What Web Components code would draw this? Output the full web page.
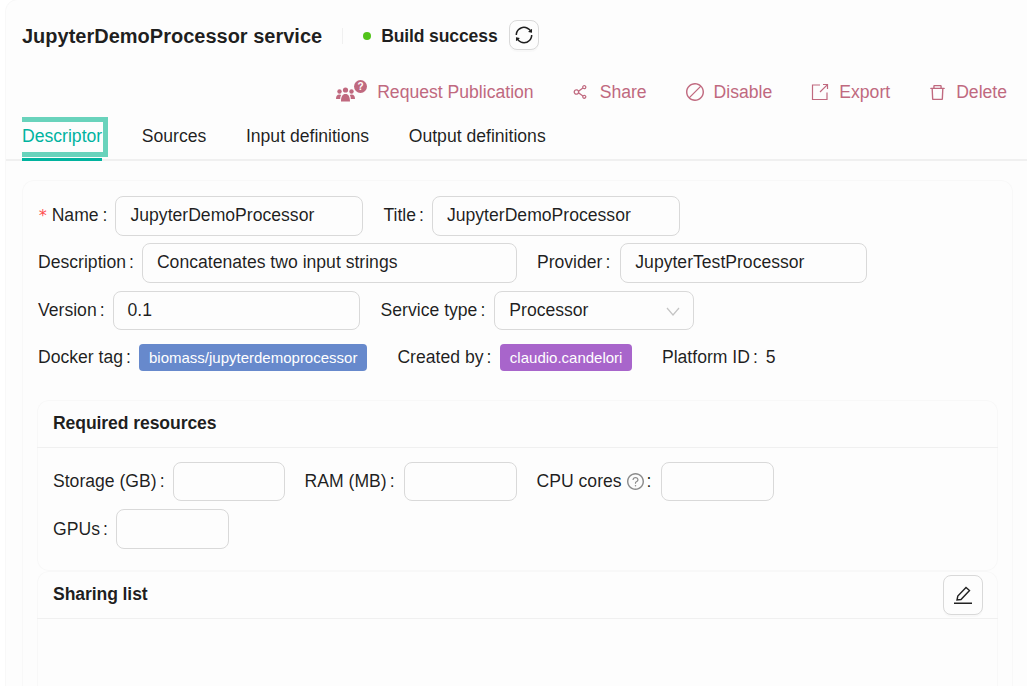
<!DOCTYPE html>
<html>
<head>
<meta charset="utf-8">
<style>
  html, body { margin: 0; height: 100%; overflow: hidden; background: #fff; }
  body { font-family: "Liberation Sans", Arial, sans-serif; font-size: 17.6px; color: rgba(0,0,0,.88); }
  svg { display: block; }
</style>
</head>
<body>
<template id="panel-tpl">
  <style>
    :host { display: block; margin-left: 6px; height: 686px; overflow: hidden; background: #fdfdfd; border-radius: 12px 0 0 0; box-shadow: 0 0 0 1px #f8f8f8; }
    .panel__head { display: flex; align-items: center; height: 30px; padding: 20px 0 0 16px; }
    .panel__actions { display: flex; justify-content: flex-end; align-items: center; height: 40px; margin-top: 22px; padding-right: 20px; gap: 39px; }
    .panel__body { padding: 19px 14px 0 16px; }
  </style>
  <div class="panel__head"><slot name="head"></slot></div>
  <div class="panel__actions"><slot name="actions"></slot></div>
  <slot name="tabs"></slot>
  <div class="panel__body"><slot></slot></div>
</template>

<template id="head-tpl">
  <style>
    :host { display: flex; align-items: center; }
    .head__title { font-size: 20px; font-weight: 700; margin-top: 2px; }
    .head__divider { width: 1px; height: 16px; margin: 2px 20px 0; background: #f0f0f0; }
    .head__dot { width: 8px; height: 8px; border-radius: 50%; background: #52c41a; margin: 2px 10px 0 0; }
    .head__status { font-weight: 700; margin-top: 2px; letter-spacing: -.15px; }
    .head__refresh { display: flex; align-items: center; justify-content: center; width: 28px; height: 28px; margin-left: 11px; border: 1px solid #d9d9d9; border-radius: 8px; background: #fdfdfd; box-shadow: 0 2px 0 rgba(0,0,0,.02); }
  </style>
  <span class="head__title"><slot name="title"></slot></span>
  <span class="head__divider"></span>
  <span class="head__dot"></span>
  <span class="head__status"><slot name="status"></slot></span>
  <span class="head__refresh">
    <svg width="18" height="18" viewBox="64 64 896 896" fill="#1f1f1f"><path d="M168 504.2c1-43.7 10-86.1 26.9-126 17.3-41 42.1-77.7 73.7-109.4S337 212.3 378 195c42.4-17.9 87.4-27 133.9-27s91.5 9.1 133.8 27A341.5 341.5 0 01755 268.8c9.9 9.9 19.2 20.4 27.8 31.4l-60.2 47a8 8 0 003 14.1l175.7 43c5 1.2 9.9-2.6 9.9-7.7l.8-180.9c0-6.7-7.7-10.5-12.9-6.3l-56.4 44.1C765.8 155.1 646.2 92 511.8 92 282.7 92 96.3 275.6 92 503.8a8 8 0 008 8.2h60c4.4 0 7.9-3.5 8-7.8zm756 7.8h-60c-4.4 0-7.9 3.5-8 7.8-1 43.7-10 86.1-26.9 126-17.3 41-42.1 77.8-73.7 109.4A342.45 342.45 0 01512.1 856a342.24 342.24 0 01-243.2-100.8c-9.9-9.9-19.2-20.4-27.8-31.4l60.2-47a8 8 0 00-3-14.1l-175.7-43c-5-1.2-9.9 2.6-9.9 7.7l-.7 181c0 6.7 7.7 10.5 12.9 6.3l56.4-44.1C258.2 868.9 377.8 932 512.2 932c229.2 0 415.5-183.7 419.8-411.8a8 8 0 00-8-8.2z"/></svg>
  </span>
</template>

<template id="action-tpl">
  <style>
    :host { display: flex; align-items: center; gap: 10px; color: #c0697f; white-space: nowrap; }
    .action__icon { display: flex; align-items: center; position: relative; }
  </style>
  <span class="action__icon"><slot name="icon"></slot></span>
  <span><slot></slot></span>
</template>

<template id="tabs-tpl">
  <style>
    :host { display: flex; gap: 39.6px; height: 49px; padding-left: 16px; box-sizing: border-box; box-shadow: inset 0 -2px 0 #f0f0f0; }
  </style>
  <slot></slot>
</template>

<template id="tab-tpl">
  <style>
    :host { display: flex; align-items: center; position: relative; height: 49px; padding-bottom: 1px; box-sizing: border-box; white-space: nowrap; }
    :host([active]) { color: #00b3a0; }
    :host([active])::before { content: ""; position: absolute; left: 0; right: 0; bottom: 0; height: 3px; background: #00b39e; }
    :host([active])::after { content: ""; position: absolute; left: 0; right: -6px; top: 5px; bottom: 4px; border: 5px solid #69d3bc; border-left: 0; }
  </style>
  <slot></slot>
</template>

<template id="card-tpl">
  <style>
    :host { display: block; background: #fdfdfd; border-radius: 12px; box-shadow: inset 0 0 0 1px #f8f8f8; padding: 16px 15px 22px; }
  </style>
  <slot></slot>
</template>

<template id="section-tpl">
  <style>
    :host { display: block; background: #fdfdfd; border-radius: 12px; box-shadow: inset 0 0 0 1px #f8f8f8; }
    .section__head { display: flex; align-items: center; justify-content: space-between; height: 46.6px; padding: 0 15px 0 16px; border-bottom: 1px solid #f0f0f0; font-weight: 700; letter-spacing: -.1px; }
    .section__body { display: flex; flex-direction: column; gap: 7.8px; padding: 14px 15px 22.6px; }
  </style>
  <div class="section__head"><span><slot name="title"></slot></span><slot name="extra"></slot></div>
  <div class="section__body"><slot></slot></div>
</template>

<template id="row-tpl">
  <style>
    :host { display: flex; align-items: center; gap: 20px; min-height: 39.6px; margin-bottom: 8.1px; padding-left: 1px; }
  </style>
  <slot></slot>
</template>

<template id="field-tpl">
  <style>
    :host { display: flex; align-items: center; white-space: nowrap; }
    .field__star { display: none; color: #ff4d4f; margin-right: 4px; font-family: "DejaVu Sans Mono", monospace; font-size: 16px; }
    :host([required]) .field__star { display: inline; }
    .field__colon { margin: 0 var(--colon-gap, 8px) 0 3px; }
    :host([required]) .field__colon { margin-left: 4px; }
  </style>
  <span class="field__star">*</span>
  <span><slot name="label"></slot></span><slot name="hint"></slot>
  <span class="field__colon">:</span>
  <slot></slot>
</template>

<template id="input-tpl">
  <style>
    :host { display: flex; align-items: center; box-sizing: border-box; width: var(--w, 248px); height: 39.6px; padding: 0 14px; border: 1px solid #d9d9d9; border-radius: 8px; white-space: nowrap; }
  </style>
  <slot></slot>
</template>

<template id="select-tpl">
  <style>
    :host { display: flex; align-items: center; justify-content: space-between; box-sizing: border-box; width: 200px; height: 39.6px; padding: 0 13px 0 14px; border: 1px solid #d9d9d9; border-radius: 8px; }
  </style>
  <span><slot></slot></span>
  <svg width="14" height="14" viewBox="0 0 14 14" fill="none" stroke="#c4c4c4" stroke-width="1.2"><path d="M1 4l6 7 6-7"/></svg>
</template>

<template id="tag-tpl">
  <style>
    :host { display: inline-flex; align-items: center; height: 27px; padding: 0 10px; border-radius: 4px; font-size: 15px; color: #fff; background: var(--bg, #6789cc); white-space: nowrap; }
  </style>
  <slot></slot>
</template>

<template id="square-btn-tpl">
  <style>
    :host { display: flex; align-items: center; justify-content: center; box-sizing: border-box; width: 40px; height: 40px; border: 1px solid #d9d9d9; border-radius: 8px; background: #fdfdfd; box-shadow: 0 2px 0 rgba(0,0,0,.02); }
  </style>
  <slot></slot>
</template>

<svc-panel>
  <svc-head slot="head">
    <span slot="title">JupyterDemoProcessor service</span>
    <span slot="status">Build success</span>
  </svc-head>

  <svc-action slot="actions" style="margin-right:-1px">
    <span slot="icon" style="display:block;width:31px;height:24px;position:relative">
      <svg style="position:absolute;left:0;top:6px" width="19" height="16" viewBox="0 0 19 16" fill="#c0697f">
        <circle cx="3.5" cy="5.5" r="2.2"/><circle cx="15.5" cy="5.5" r="2.2"/><circle cx="9.5" cy="4" r="2.6"/>
        <path d="M0 13c0-3 1-4.5 3.5-4.5.8 0 1.300.2 1.800.5-.8 1-1.100 2.300-1.100 4zM19 13c0-3-1-4.500-3.500-4.500-.8 0-1.300.2-1.800.5.800 1 1.100 2.300 1.100 4zM5 15.500c0-5 1.500-7.500 4.500-7.500s4.500 2.500 4.500 7.500z"/>
      </svg>
      <span style="position:absolute;left:18px;top:0;width:13px;height:13px;border-radius:50%;background:#c0697f;color:#fff;font-size:10px;font-weight:700;line-height:13px;text-align:center">?</span>
    </span>
    Request Publication
  </svc-action>
  <svc-action slot="actions">
    <svg slot="icon" style="margin-right:2px" width="16" height="16" viewBox="64 64 896 896" fill="#c0697f"><path d="M752 664c-28.500 0-54.800 10-75.400 26.700L469.400 540.800a160.680 160.680 0 000-57.600l207.200-149.900C697.200 350 723.500 360 752 360c66.200 0 120-53.800 120-120s-53.800-120-120-120-120 53.800-120 120c0 11.600 1.600 22.700 4.700 33.300L439.900 415.800C410.700 377.100 364.300 352 312 352c-88.400 0-160 71.600-160 160s71.600 160 160 160c52.300 0 98.700-25.100 127.900-63.800l196.800 142.500c-3.100 10.600-4.700 21.800-4.700 33.300 0 66.200 53.800 120 120 120s120-53.800 120-120-53.800-120-120-120zm0-476c28.700 0 52 23.300 52 52s-23.300 52-52 52-52-23.300-52-52 23.300-52 52-52zM312 600c-48.500 0-88-39.500-88-88s39.500-88 88-88 88 39.500 88 88-39.500 88-88 88zm440 236c-28.700 0-52-23.300-52-52s23.300-52 52-52 52 23.300 52 52-23.300 52-52 52z"/></svg>
    Share
  </svc-action>
  <svc-action slot="actions">
    <svg slot="icon" width="18" height="18" viewBox="64 64 896 896" fill="#c0697f"><path d="M512 64C264.600 64 64 264.600 64 512s200.600 448 448 448 448-200.600 448-448S759.400 64 512 64zm0 72c92.300 0 177.200 32.500 243.800 86.600L222.600 755.800C168.500 689.200 136 604.300 136 512c0-207.500 168.500-376 376-376zm0 752c-92.300 0-177.200-32.500-243.800-86.600l533.200-533.200C855.500 334.800 888 419.700 888 512c0 207.500-168.500 376-376 376z"/></svg>
    Disable
  </svc-action>
  <svc-action slot="actions">
    <svg slot="icon" width="18" height="18" viewBox="0 0 18 18" fill="none" stroke="#c0697f" stroke-width="1.2"><path d="M9 2H1.500v14.500H16V9.500M9 9L16.200 1.800M12 1.500h4.500v4.500"/></svg>
    Export
  </svc-action>
  <svc-action slot="actions">
    <svg slot="icon" width="17" height="17" viewBox="64 64 896 896" fill="#c0697f"><path d="M360 184h-8c4.400 0 8-3.600 8-8v8h304v-8c0 4.400 3.600 8 8 8h-8v72h72v-80c0-35.300-28.700-64-64-64H352c-35.300 0-64 28.700-64 64v80h72v-72zm504 72H160c-17.700 0-32 14.300-32 32v32c0 4.400 3.600 8 8 8h60.400l24.700 523c1.600 34.100 29.800 61 63.900 61h454c34.200 0 62.300-26.800 63.900-61l24.700-523H888c4.400 0 8-3.600 8-8v-32c0-17.700-14.300-32-32-32zM731.300 840H292.700l-24.200-512h487l-24.200 512z"/></svg>
    Delete
  </svc-action>

  <svc-tabs slot="tabs">
    <svc-tab active>Descriptor</svc-tab>
    <svc-tab>Sources</svc-tab>
    <svc-tab>Input definitions</svc-tab>
    <svc-tab>Output definitions</svc-tab>
  </svc-tabs>

  <svc-card>
    <svc-row style="margin-bottom:7.5px">
      <svc-field required><span slot="label">Name</span><svc-input>JupyterDemoProcessor</svc-input></svc-field>
      <svc-field><span slot="label">Title</span><svc-input>JupyterDemoProcessor</svc-input></svc-field>
    </svc-row>
    <svc-row>
      <svc-field><span slot="label">Description</span><svc-input style="--w:375px">Concatenates two input strings</svc-input></svc-field>
      <svc-field style="--colon-gap:10px"><span slot="label">Provider</span><svc-input style="--w:247px">JupyterTestProcessor</svc-input></svc-field>
    </svc-row>
    <svc-row style="gap:21px;margin-bottom:7.7px">
      <svc-field><span slot="label">Version</span><svc-input style="--w:247px">0.1</svc-input></svc-field>
      <svc-field style="--colon-gap:9px"><span slot="label">Service type</span><svc-select>Processor</svc-select></svc-field>
    </svc-row>
    <svc-row style="gap:30px;margin-bottom:22.6px">
      <svc-field><span slot="label">Docker tag</span><svc-tag>biomass/jupyterdemoprocessor</svc-tag></svc-field>
      <svc-field style="--colon-gap:9px"><span slot="label">Created by</span><svc-tag style="--bg:#a865cb;padding:0 9.5px">claudio.candelori</svc-tag></svc-field>
      <svc-field><span slot="label">Platform ID</span>5</svc-field>
    </svc-row>

    <svc-section>
      <span slot="title">Required resources</span>
      <svc-row style="margin:0">
        <svc-field><span slot="label">Storage (GB)</span><svc-input style="--w:112px"></svc-input></svc-field>
        <svc-field style="--colon-gap:9px"><span slot="label">RAM (MB)</span><svc-input style="--w:113px"></svc-input></svc-field>
        <svc-field style="--colon-gap:9.5px"><span slot="label">CPU cores</span>
          <svg slot="hint" style="margin-left:5px" width="17" height="17" viewBox="64 64 896 896" fill="#8c8c8c"><path d="M512 64C264.600 64 64 264.600 64 512s200.600 448 448 448 448-200.600 448-448S759.400 64 512 64zm0 820c-205.400 0-372-166.600-372-372s166.600-372 372-372 372 166.600 372 372-166.600 372-372 372z"/><path d="M623.600 316.700C593.600 290.400 554 276 512 276s-81.600 14.500-111.600 40.700C369.200 344 352 380.700 352 420v7.600c0 4.400 3.600 8 8 8h48c4.400 0 8-3.600 8-8V420c0-44.100 43.100-80 96-80s96 35.900 96 80c0 31.100-22 59.600-56.100 72.700-21.200 8.100-39.200 22.300-52.100 40.900-13.100 19-19.900 41.800-19.900 64.900V620c0 4.400 3.600 8 8 8h48c4.400 0 8-3.600 8-8v-22.700a48.300 48.300 0 0130.900-44.800c59-22.700 97.100-74.700 97.100-132.500.1-39.300-17.100-76-48.300-103.300zM472 732a40 40 0 1080 0 40 40 0 10-80 0z"/></svg>
          <svc-input style="--w:113px"></svc-input></svc-field>
      </svc-row>
      <svc-row style="margin:0">
        <svc-field><span slot="label">GPUs</span><svc-input style="--w:113px"></svc-input></svc-field>
      </svc-row>
    </svc-section>

    <svc-section>
      <span slot="title">Sharing list</span>
      <svc-square-btn slot="extra">
        <svg width="20" height="20" viewBox="0 0 20 20" fill="none" stroke="#222" stroke-width="1.4"><path d="M4 15l.8-4L13 2.500l3.500 3L8 14.500zM1 18.300h18"/></svg>
      </svc-square-btn>
      <div style="height:200px"></div>
    </svc-section>
  </svc-card>
</svc-panel>

<script>
  // every element is the same thing: clone its template into an open shadow root
  const elements = {
    'svc-panel': 'panel-tpl',
    'svc-head': 'head-tpl',
    'svc-action': 'action-tpl',
    'svc-tabs': 'tabs-tpl',
    'svc-tab': 'tab-tpl',
    'svc-card': 'card-tpl',
    'svc-section': 'section-tpl',
    'svc-row': 'row-tpl',
    'svc-field': 'field-tpl',
    'svc-input': 'input-tpl',
    'svc-select': 'select-tpl',
    'svc-tag': 'tag-tpl',
    'svc-square-btn': 'square-btn-tpl',
  };

  Object.keys(elements).forEach((name) => {
    const template = document.getElementById(elements[name]);
    window.customElements.define(name, class extends HTMLElement {
      constructor() {
        super();
        this.shadow = this.attachShadow({ mode: 'open' });
        this.shadow.appendChild(template.content.cloneNode(true));
      }
    });
  });
</script>
</body>
</html>
